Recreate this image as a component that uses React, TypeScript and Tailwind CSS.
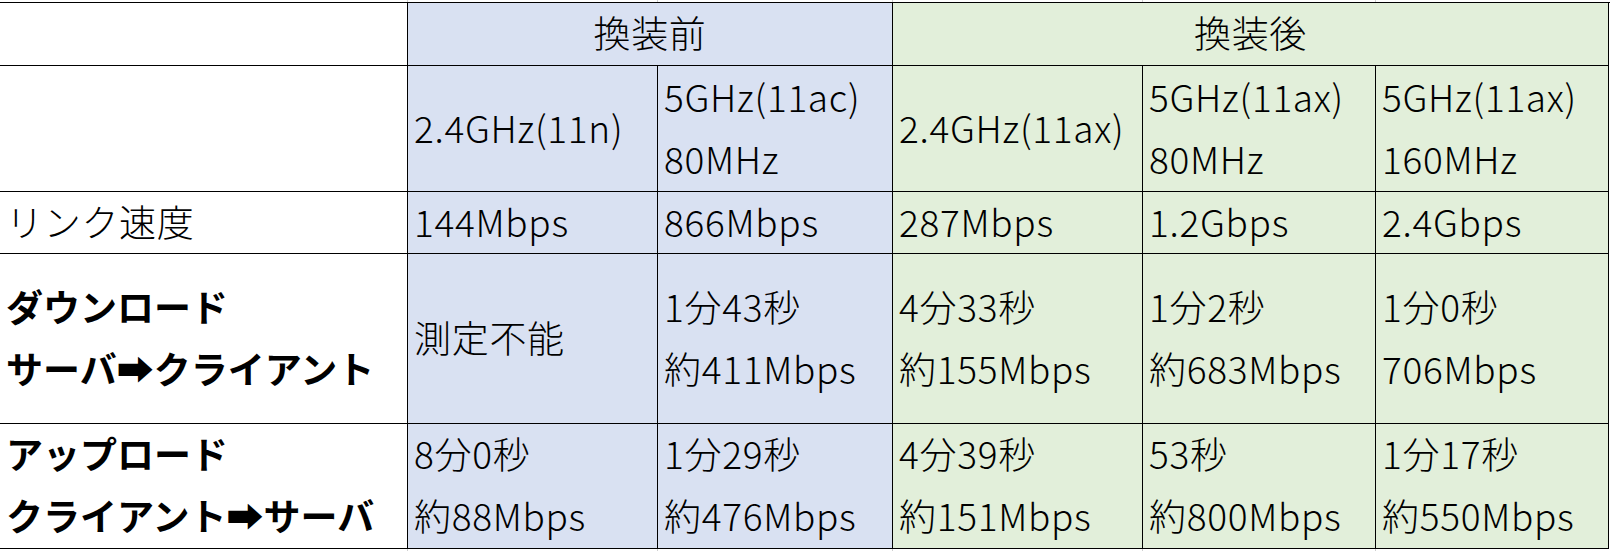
import React from "react";

type CellProps = {
  bg?: "blue" | "green" | "white";
  span?: number;
  center?: boolean;
  bold?: boolean;
  lines?: string[];
};

function Cell({ bg = "white", span = 1, center = false, bold = false, lines = [] }: CellProps) {
  const bgClass =
    bg === "blue" ? "bg-[#d9e1f2]" : bg === "green" ? "bg-[#e2efda]" : "bg-white";
  const spanClass = span === 2 ? "col-span-2" : span === 3 ? "col-span-3" : "";
  return (
    <div
      className={`${bgClass} ${spanClass} flex flex-col justify-center border-r border-b border-black px-[6px] pb-[4px] whitespace-nowrap ${
        center ? "items-center" : "items-start"
      } ${bold ? "font-bold" : "font-light tracking-[0.7px]"}`}
    >
      {lines.map((l, i) => (
        <div key={i} className="leading-[62px]">
          {l}
        </div>
      ))}
    </div>
  );
}

function GridStrip() {
  return (
    <div className="grid h-[2px] grid-cols-[408px_250px_235px_250px_233px_233px]">
      <div className="border-r border-[#d0d0d0]" />
      <div className="border-r border-[#d0d0d0]" />
      <div className="border-r border-[#d0d0d0]" />
      <div className="border-r border-[#d0d0d0]" />
      <div className="border-r border-[#d0d0d0]" />
      <div />
    </div>
  );
}

export default function App() {
  return (
    <div className="h-[551px] w-[1610px] overflow-hidden bg-white font-['Noto_Sans_CJK_JP',sans-serif] text-[37px] text-black">
      <GridStrip />
      <div className="grid grid-cols-[408px_250px_235px_250px_233px_233px] grid-rows-[63px_126px_62px_170px_125px] border-t border-black">
        {/* header */}
        <Cell />
        <Cell bg="blue" span={2} center lines={["換装前"]} />
        <Cell bg="green" span={3} center lines={["換装後"]} />

        {/* band */}
        <Cell />
        <Cell bg="blue" lines={["2.4GHz(11n)"]} />
        <Cell bg="blue" lines={["5GHz(11ac)", "80MHz"]} />
        <Cell bg="green" lines={["2.4GHz(11ax)"]} />
        <Cell bg="green" lines={["5GHz(11ax)", "80MHz"]} />
        <Cell bg="green" lines={["5GHz(11ax)", "160MHz"]} />

        {/* link speed */}
        <Cell lines={["リンク速度"]} />
        <Cell bg="blue" lines={["144Mbps"]} />
        <Cell bg="blue" lines={["866Mbps"]} />
        <Cell bg="green" lines={["287Mbps"]} />
        <Cell bg="green" lines={["1.2Gbps"]} />
        <Cell bg="green" lines={["2.4Gbps"]} />

        {/* download */}
        <Cell bold lines={["ダウンロード", "サーバ➡クライアント"]} />
        <Cell bg="blue" lines={["測定不能"]} />
        <Cell bg="blue" lines={["1分43秒", "約411Mbps"]} />
        <Cell bg="green" lines={["4分33秒", "約155Mbps"]} />
        <Cell bg="green" lines={["1分2秒", "約683Mbps"]} />
        <Cell bg="green" lines={["1分0秒", "706Mbps"]} />

        {/* upload */}
        <Cell bold lines={["アップロード", "クライアント➡サーバ"]} />
        <Cell bg="blue" lines={["8分0秒", "約88Mbps"]} />
        <Cell bg="blue" lines={["1分29秒", "約476Mbps"]} />
        <Cell bg="green" lines={["4分39秒", "約151Mbps"]} />
        <Cell bg="green" lines={["53秒", "約800Mbps"]} />
        <Cell bg="green" lines={["1分17秒", "約550Mbps"]} />
      </div>
      <GridStrip />
    </div>
  );
}
